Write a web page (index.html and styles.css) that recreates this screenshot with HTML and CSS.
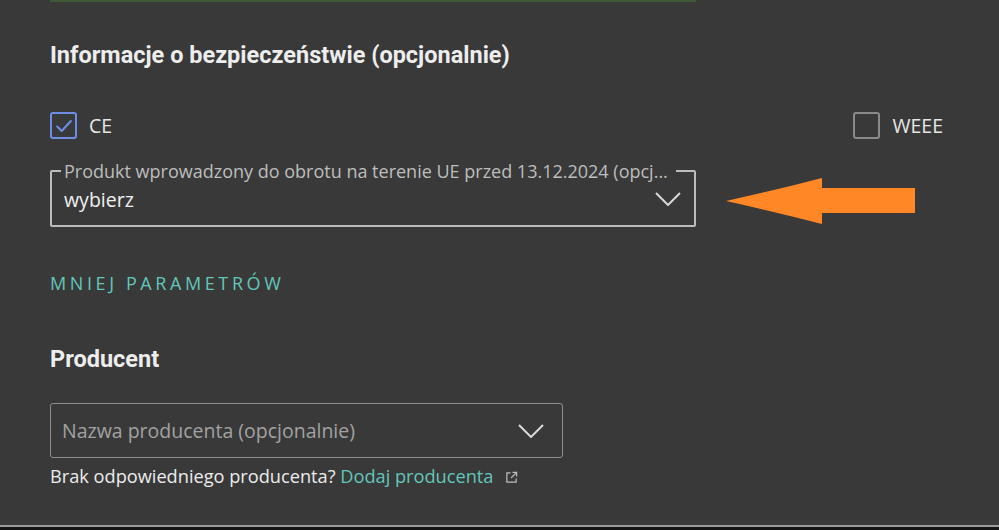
FILE: index.html
```html
<!DOCTYPE html>
<html lang="pl">
<head>
  <meta charset="UTF-8" />
  <meta name="viewport" content="width=device-width, initial-scale=1.0"/>
  <title>Informacje o bezpieczeństwie</title>
  <link rel="stylesheet" href="styles.css">
</head>
<body>
  <div class="page">
    <div class="top-line"></div>

    <h2 class="section-title">Informacje o bezpieczeństwie (opcjonalnie)</h2>

    <div class="checks">
      <label class="check">
        <span class="box checked">
          <svg viewBox="0 0 24 24" width="22" height="22"><path d="M4.5 12.5l5 5 10-11" fill="none" stroke="#6e8ee6" stroke-width="2.2" stroke-linecap="round" stroke-linejoin="round"/></svg>
        </span>
        CE
      </label>
      <label class="check">
        <span class="box"></span>
        WEEE
      </label>
    </div>

    <div class="field-row">
      <fieldset class="select-outlined">
        <legend>Produkt wprowadzony do obrotu na terenie UE przed 13.12.2024 (opcj...</legend>
        <span class="value">wybierz</span>
        <svg class="chevron" viewBox="0 0 26 14" width="26" height="14"><path d="M1 1l12 12L25 1" fill="none" stroke="#d8d8d8" stroke-width="2"/></svg>
      </fieldset>
      <svg class="arrow" viewBox="0 0 190 48" width="190" height="48"><path d="M0 23 Q50 12 96 0 L96 10 L189 10 L189 35 L96 35 L96 46 Q50 34 0 23 Z" fill="#ff8725"/></svg>
    </div>

    <a class="more" href="#">Mniej parametrów</a>

    <h2 class="section-title producer">Producent</h2>

    <div class="select-plain">
      <span class="placeholder">Nazwa producenta (opcjonalnie)</span>
      <svg class="chevron" viewBox="0 0 26 14" width="26" height="14"><path d="M1 1l12 12L25 1" fill="none" stroke="#d8d8d8" stroke-width="2"/></svg>
    </div>
    <p class="hint">Brak odpowiedniego producenta? <a href="#">Dodaj producenta</a>
      <svg class="ext" viewBox="0 0 14 14" width="13" height="13"><path d="M6 2H2v10h10V8M8 1.5h4.5V6M12.5 1.5L6.5 7.5" fill="none" stroke="#bdbdbd" stroke-width="1.3"/></svg>
    </p>
  </div>
  <div class="bottom-line"></div>
</body>
</html>
```

FILE: styles.css
```css
body {
  margin: 0;
  background: #141414;
  font-family: 'Open Sans', sans-serif;
  color: #ececec;
}
.page {
  background: #393939;
  height: 525px;
  padding: 0 56px 0 50px;
  box-sizing: border-box;
  overflow: hidden;
}
.top-line {
  width: 646px;
  height: 2px;
  background: #3c5a33;
}
.section-title {
  font-family: Roboto, sans-serif;
  font-weight: 700;
  font-size: 23.5px;
  line-height: 28px;
  margin: 39px 0 0;
  color: #ededed;
}
.checks {
  display: flex;
  justify-content: space-between;
  margin-top: 43px;
  height: 27px;
}
.check {
  display: flex;
  align-items: center;
  gap: 12px;
  font-size: 19.5px;
  line-height: 27px;
  color: #e6e6e6;
}
.box {
  width: 23px;
  height: 23px;
  border: 2px solid #8a8a8a;
  border-radius: 3px;
  display: flex;
  align-items: center;
  justify-content: center;
}
.box.checked {
  border-color: #6e8ee6;
}
.field-row {
  display: flex;
  align-items: flex-start;
  gap: 30px;
  margin-top: 20px;
}
.select-outlined {
  width: 646px;
  height: 68px;
  box-sizing: border-box;
  margin: 0;
  padding: 0 12px 10px;
  border: 2px solid #bcbcbc;
  border-radius: 2px;
  display: flex;
  align-items: center;
  justify-content: space-between;
}
.select-outlined legend {
  font-size: 18px;
  line-height: 24px;
  color: #bdbdbd;
  padding: 0 8px 0 3px;
  margin-left: -3px;
  white-space: nowrap;
}
.value {
  font-size: 19.5px;
  color: #f0f0f0;
}
.chevron {
  margin-right: 1px;
}
.arrow {
  margin-top: 19px;
}
.more {
  display: block;
  width: fit-content;
  margin-top: 44px;
  text-transform: uppercase;
  letter-spacing: 0.2em;
  font-size: 18px;
  line-height: 24px;
  color: #62c6b9;
  text-decoration: none;
}
.section-title.producer {
  margin-top: 50px;
}
.select-plain {
  width: 513px;
  height: 55px;
  box-sizing: border-box;
  margin-top: 30px;
  border: 1px solid #8e8e8e;
  border-radius: 3px;
  padding: 0 17px 0 11px;
  display: flex;
  align-items: center;
  justify-content: space-between;
}
.placeholder {
  font-size: 19.5px;
  color: #a2a2a2;
}
.hint {
  margin: 6px 0 0;
  font-size: 18.2px;
  line-height: 24px;
  color: #ececec;
}
.hint a {
  color: #62c6b9;
  text-decoration: none;
}
.ext {
  margin-left: 7px;
  vertical-align: -1px;
}
.bottom-line {
  height: 2px;
  background: #9a9a9a;
}
```
